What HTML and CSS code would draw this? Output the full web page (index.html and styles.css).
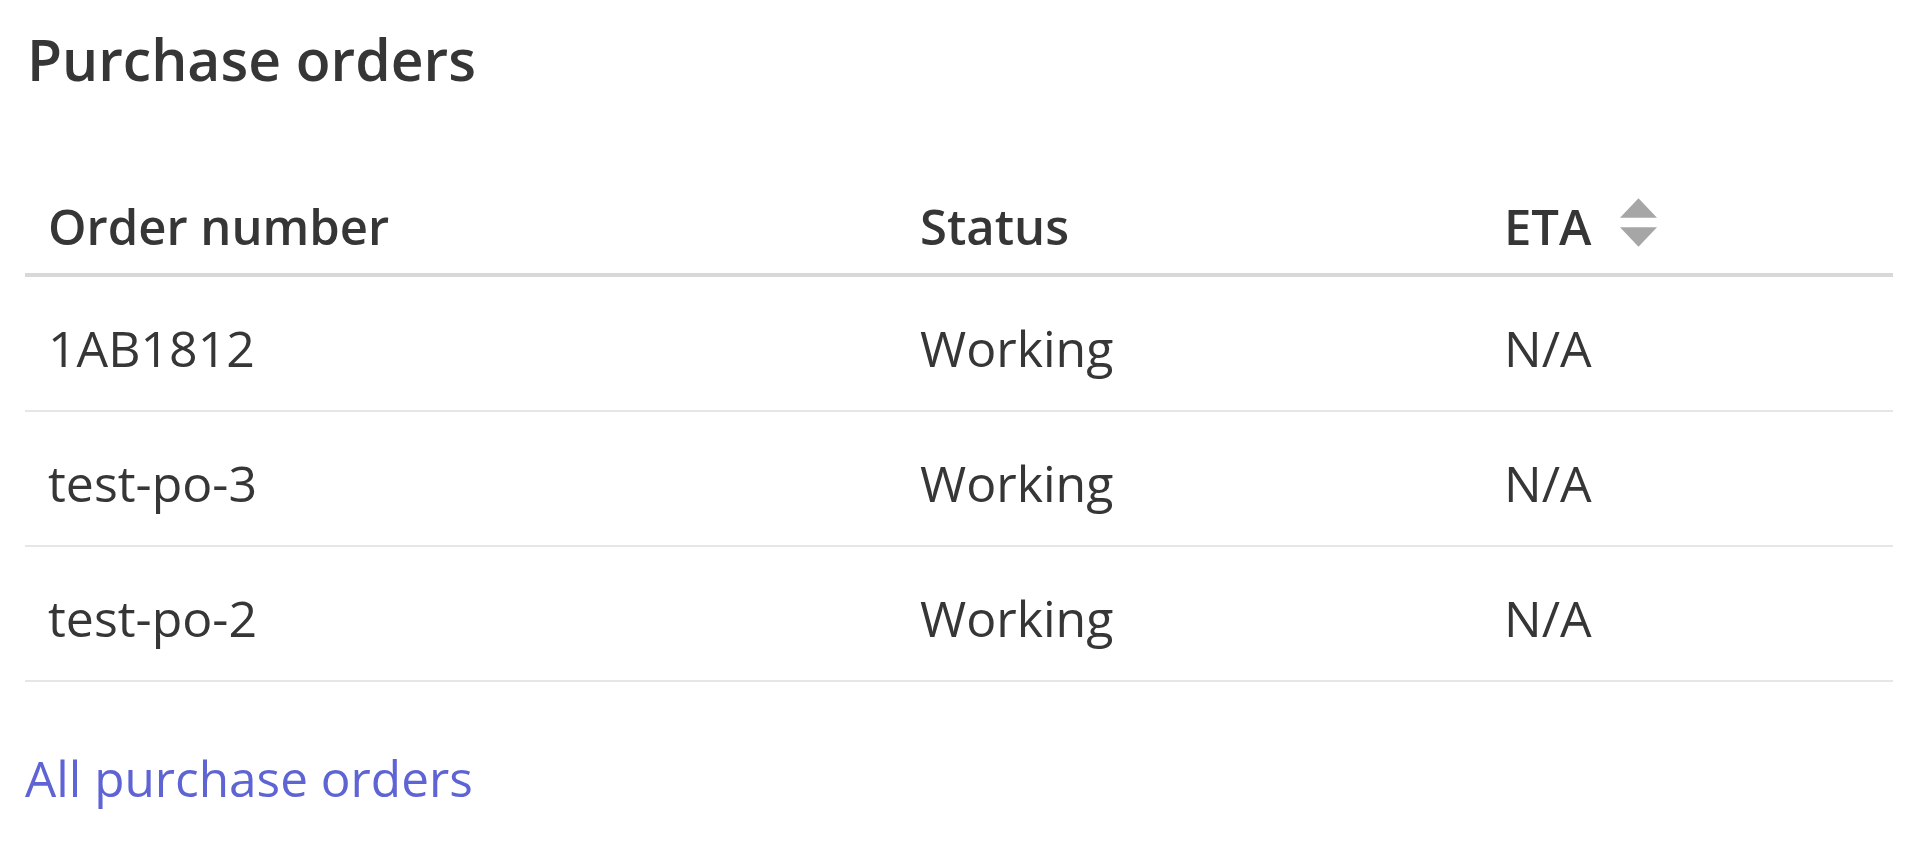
FILE: index.html
```html
<!DOCTYPE html>
<html lang="en">
<head>
<meta charset="utf-8">
<title>Purchase orders</title>
<link rel="stylesheet" href="styles.css">
</head>
<body>
<main class="card">
  <h2 class="title">Purchase orders</h2>
  <table class="orders">
    <colgroup>
      <col class="col-order">
      <col class="col-status">
      <col class="col-eta">
    </colgroup>
    <thead>
      <tr>
        <th>Order number</th>
        <th>Status</th>
        <th>
          <span class="sortable">ETA
            <svg class="sort-icon" viewBox="0 0 38 50" width="37" height="49" aria-hidden="true">
              <polygon points="0,20 19,0 38,20" />
              <polygon points="0,30 38,30 19,50" />
            </svg>
          </span>
        </th>
      </tr>
    </thead>
    <tbody>
      <tr><td>1AB1812</td><td>Working</td><td>N/A</td></tr>
      <tr><td>test-po-3</td><td>Working</td><td>N/A</td></tr>
      <tr><td>test-po-2</td><td>Working</td><td>N/A</td></tr>
    </tbody>
  </table>
  <a class="all-link" href="#">All purchase orders</a>
</main>
</body>
</html>
```

FILE: styles.css
```css
html, body {
  margin: 0;
  padding: 0;
  background: #ffffff;
}

body {
  font-family: "Open Sans", "Noto Sans", "Liberation Sans", sans-serif;
  color: #333333;
}

.card {
  padding: 20px 33px 0 25px;
  display: flex;
  flex-direction: column;
  align-items: flex-start;
}

.title {
  margin: 0;
  font-size: 57px;
  line-height: 79px;
  font-weight: 600;
  color: #363636;
  padding-left: 2px;
}

.orders {
  width: 100%;
  margin-top: 60px;
  border-collapse: collapse;
  table-layout: fixed;
}

.col-order { width: 872px; }
.col-status { width: 584px; }

.orders th,
.orders td {
  text-align: left;
  font-size: 50px;
  line-height: 68px;
  padding: 0 0 0 23px;
  white-space: nowrap;
}

.orders th {
  font-size: 49px;
  font-weight: 600;
  color: #363636;
  padding-top: 33px;
  padding-bottom: 13px;
  border-bottom: 4px solid #d8d8d8;
}

.orders td {
  font-weight: 400;
  color: #363636;
  padding-top: 37px;
  padding-bottom: 28px;
  border-bottom: 2px solid #e6e6e6;
}

.sortable {
  display: inline-flex;
  align-items: center;
  gap: 29px;
}

.sort-icon {
  fill: #a6a6a6;
  margin-bottom: 8px;
}

.all-link {
  margin-top: 62px;
  font-size: 49.5px;
  line-height: 68px;
  color: #5f64d4;
  text-decoration: none;
}
```
